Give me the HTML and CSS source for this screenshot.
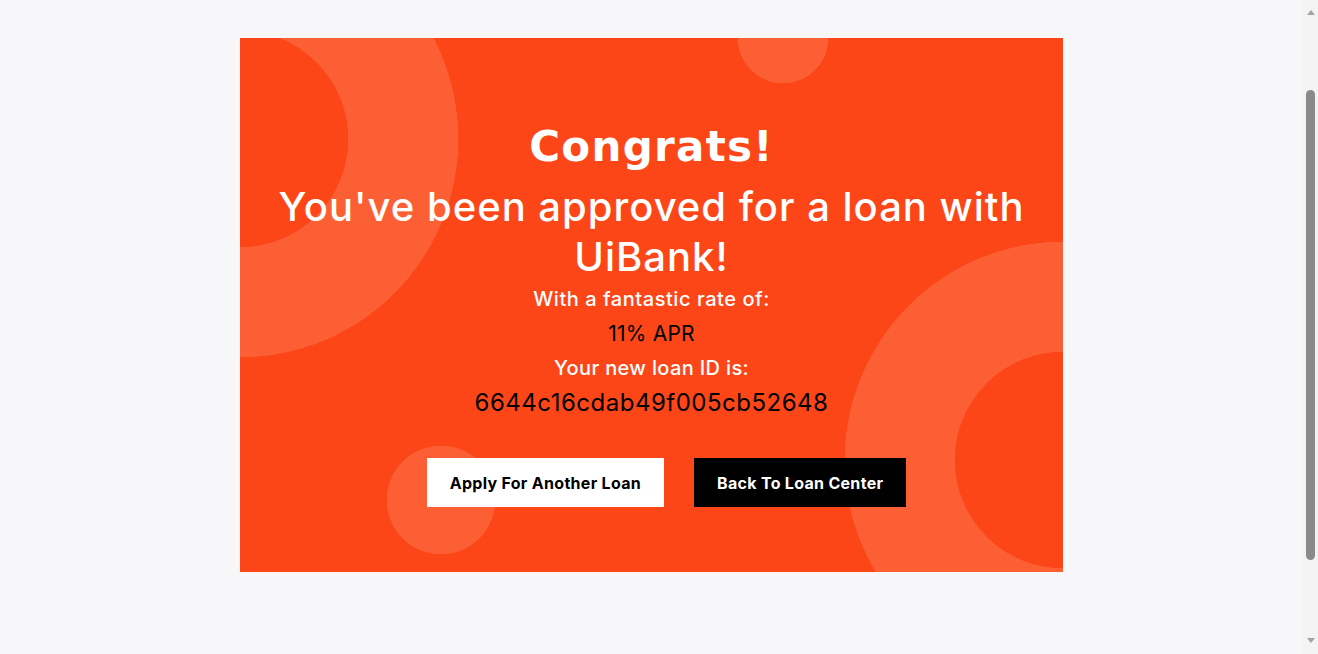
FILE: index.html
```html
<!DOCTYPE html>
<html lang="en">
<head>
<meta charset="utf-8">
<title>UiBank - Loan Approved</title>
<link rel="stylesheet" href="styles.css">
</head>
<body>
<main class="page">
  <section class="card">
    <h1 class="title">Congrats!</h1>
    <h2 class="subtitle">You've been approved for a loan with UiBank!</h2>
    <p class="label">With a fantastic rate of:</p>
    <p class="value">11% APR</p>
    <p class="label label-id">Your new loan ID is:</p>
    <p class="value value-id">6644c16cdab49f005cb52648</p>
    <div class="actions">
      <button class="btn btn-light" type="button">Apply For Another Loan</button>
      <button class="btn btn-dark" type="button">Back To Loan Center</button>
    </div>
  </section>
</main>
<aside class="scrollbar" aria-hidden="true">
  <span class="arrow arrow-up"></span>
  <span class="track"><span class="thumb"></span></span>
  <span class="arrow arrow-down"></span>
</aside>
</body>
</html>
```
FILE: styles.css
```css
html, body {
  margin: 0;
  padding: 0;
}
body {
  background: #f7f7fa;
  font-family: "Inter", "Open Sans", "Liberation Sans", sans-serif;
  overflow: hidden;
}
.page {
  height: 654px;
  padding: 38px 15px 0 0;
  box-sizing: border-box;
  display: flex;
  flex-direction: column;
  align-items: center;
}
.card {
  width: 823px;
  height: 534px;
  flex-shrink: 0;
  box-sizing: border-box;
  padding-top: 79px;
  display: flex;
  flex-direction: column;
  align-items: center;
  text-align: center;
  background-color: #fc4618;
  background-image:
    radial-gradient(circle at 0 101px, #fc4618 108px, #fd5f35 108.5px, #fd5f35 218px, transparent 218.5px),
    radial-gradient(circle at 823px 422px, #fc4618 108px, #fd5f35 108.5px, #fd5f35 218px, transparent 218.5px),
    radial-gradient(circle at 543px 0, #fd5f35 45px, transparent 45.5px),
    radial-gradient(circle at 201px 462px, #fd5f35 54px, transparent 54.5px);
}
.title {
  margin: 0;
  font-family: "DejaVu Sans", "Inter", sans-serif;
  font-size: 42px;
  line-height: 60px;
  font-weight: 700;
  color: #ffffff;
  letter-spacing: 1.3px;
}
.subtitle {
  margin: 5px 0 0;
  width: 790px;
  font-size: 40px;
  line-height: 50px;
  font-weight: 500;
  color: #ffffff;
  letter-spacing: 1px;
}
.label, .value {
  margin: 0;
  line-height: 34.5px;
}
.label {
  font-size: 20px;
  font-weight: 500;
  color: #ffffff;
  letter-spacing: 0.55px;
}
.label-id {
  letter-spacing: 0.35px;
}
.value {
  font-size: 21px;
  font-weight: 400;
  color: #000000;
  letter-spacing: 0.2px;
}
.value-id {
  font-size: 24px;
  letter-spacing: 0.5px;
}
.actions {
  margin-top: 38px;
  padding-left: 30px;
  display: flex;
  gap: 30px;
}
.btn {
  height: 49px;
  padding: 0 23px;
  border: 0;
  border-radius: 0;
  font-family: inherit;
  font-size: 16px;
  font-weight: 700;
  letter-spacing: 0.3px;
  cursor: pointer;
}
.btn-light {
  background: #ffffff;
  color: #000000;
}
.btn-dark {
  background: #000000;
  color: #ffffff;
}
.scrollbar {
  position: fixed;
  top: 0;
  right: 0;
  width: 15px;
  height: 100%;
  background: #f3f3f3;
  display: flex;
  flex-direction: column;
  align-items: center;
}
.arrow {
  display: block;
  width: 0;
  height: 0;
  border-left: 4px solid transparent;
  border-right: 4px solid transparent;
}
.arrow-up {
  margin-top: 10px;
  border-bottom: 5px solid #a3a3a3;
}
.arrow-down {
  margin-bottom: 11px;
  border-top: 5px solid #a3a3a3;
}
.track {
  flex: 1;
  display: flex;
  flex-direction: column;
  padding-top: 75px;
  padding-bottom: 78px;
}
.thumb {
  display: block;
  flex: 1;
  width: 9px;
  border-radius: 5px;
  background: #8a8a8a;
}
```
